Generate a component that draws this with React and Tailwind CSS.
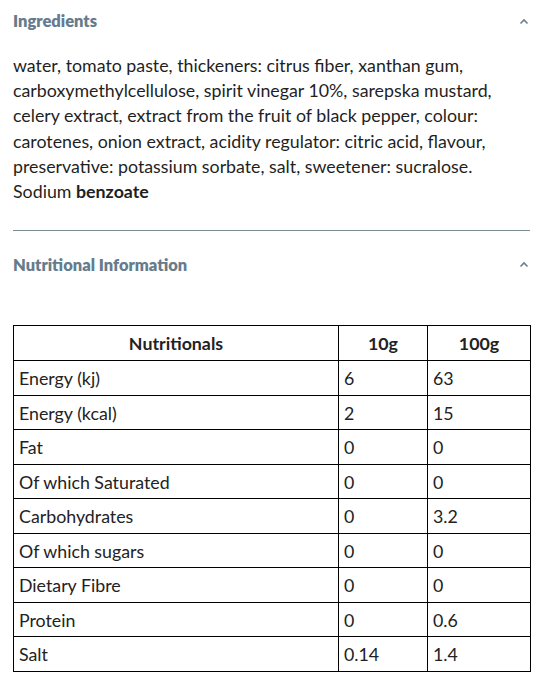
import React from "react";

const rows = [
  ["Energy (kj)", "6", "63"],
  ["Energy (kcal)", "2", "15"],
  ["Fat", "0", "0"],
  ["Of which Saturated", "0", "0"],
  ["Carbohydrates", "0", "3.2"],
  ["Of which sugars", "0", "0"],
  ["Dietary Fibre", "0", "0"],
  ["Protein", "0", "0.6"],
  ["Salt", "0.14", "1.4"],
];

function Chevron() {
  return (
    <svg width="10" height="7" viewBox="0 0 10 7" fill="none" stroke="#6b7f8f" strokeWidth="1.6">
      <polyline points="1.5 5.5 5 2 8.5 5.5" />
    </svg>
  );
}

function SectionHeader({ title }) {
  return (
    <div className="flex items-center justify-between pr-[4px]">
      <h2 className="text-[16.5px] font-extrabold text-[#667b8c] font-['Lato',sans-serif]">{title}</h2>
      <Chevron />
    </div>
  );
}

export default function App() {
  return (
    <div className="bg-white w-[546px] h-[688px] px-[13px] pt-[9px] font-['Lato',sans-serif] text-[#222]">
      <SectionHeader title="Ingredients" />

      <p className="mt-[19px] text-[17.8px] leading-[25.3px] text-[#1f1f1f] whitespace-nowrap">
        water, tomato paste, thickeners: citrus fiber, xanthan gum,<br />
        carboxymethylcellulose, spirit vinegar 10%, sarepska mustard,<br />
        celery extract, extract from the fruit of black pepper, colour:<br />
        carotenes, onion extract, acidity regulator: citric acid, flavour,<br />
        preservative: potassium sorbate, salt, sweetener: sucralose.<br />
        Sodium <strong className="font-bold">benzoate</strong>
      </p>

      <div className="mt-[25px] h-px w-[517px] bg-[#7b8c99]" />

      <div className="mt-[22px]">
        <SectionHeader title="Nutritional Information" />
      </div>

      <table className="mt-[48px] w-[518px] border-collapse text-[17.8px] text-[#222]">
        <thead>
          <tr className="h-[35px]">
            <th className="w-[325px] border border-black font-bold text-center">Nutritionals</th>
            <th className="w-[89px] border border-black font-bold text-center">10g</th>
            <th className="border border-black font-bold text-center">100g</th>
          </tr>
        </thead>
        <tbody>
          {rows.map((r) => (
            <tr key={r[0]} className="h-[34.5px]">
              {r.map((c, i) => (
                <td key={i} className="border border-black px-[5px] py-0 font-normal leading-[20px]">{c}</td>
              ))}
            </tr>
          ))}
        </tbody>
      </table>
    </div>
  );
}
